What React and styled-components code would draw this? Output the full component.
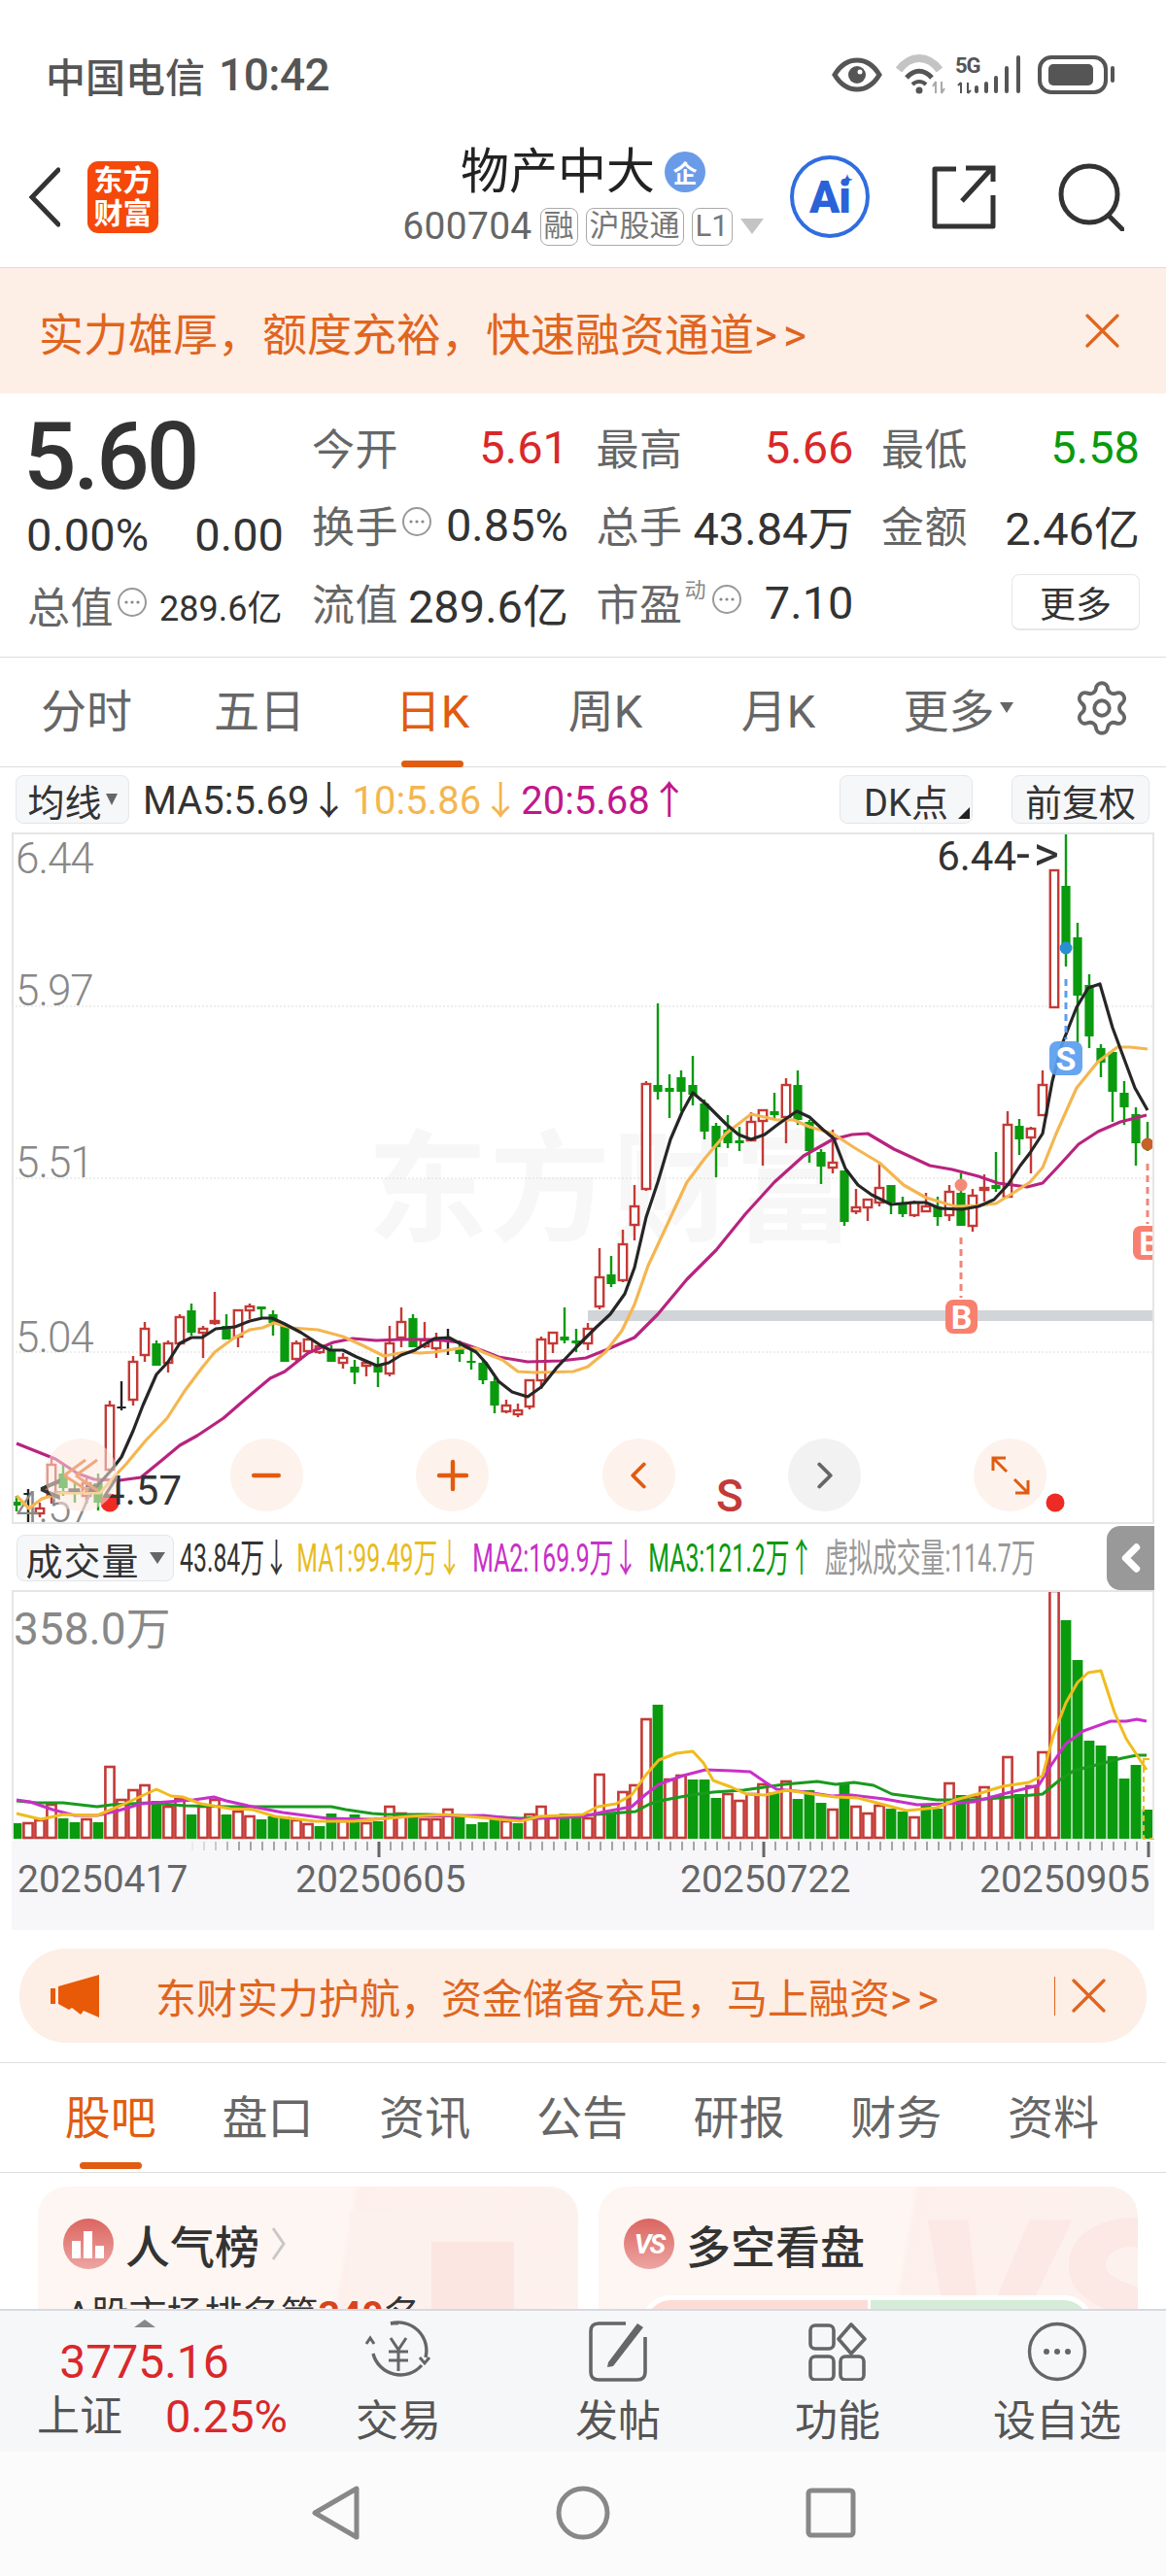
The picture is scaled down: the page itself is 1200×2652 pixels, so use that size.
import React from "react";
import styled, { createGlobalStyle } from "styled-components";
import { Settings, Minus, Plus, ChevronLeft, ChevronRight } from "lucide-react";

const Global = createGlobalStyle`
  html, body { margin: 0; padding: 0; background: #fff; }
  * { box-sizing: border-box; }
  body { font-family: Roboto, "Noto Sans CJK SC", sans-serif; }
`;

const C = { red: "#d9282a", hollow: "#c43a36", green: "#0a9a0e", orange: "#e05c10", label: "#666", text: "#333" };

/* ---------- chart data, in page pixels ---------- */
const candles = [
  ["g",1540,1546,1550,1556],["k",1533,1537,1538,1568],["r",1547,1553,1558,1562],["r",1502,1508,1540,1548],["g",1508,1517,1532,1540],
  ["g",1525,1535,1538,1547],["r",1522,1527,1540,1548],["g",1517,1527,1547,1555],["r",1442,1447,1513,1515],["k",1422,1448,1449,1452],
  ["r",1396,1402,1441,1447],["r",1361,1368,1395,1402],["g",1380,1383,1406,1406],["r",1380,1383,1403,1413],["r",1353,1356,1383,1385],
  ["g",1342,1349,1372,1375],["r",1365,1368,1372,1398],["r",1330,1360,1362,1364],["g",1353,1365,1379,1379],["r",1348,1349,1376,1387],
  ["r",1342,1345,1349,1358],["g",1345,1345,1348,1357],["g",1349,1353,1362,1375],["g",1365,1365,1402,1402],["r",1380,1383,1399,1402],
  ["r",1378,1379,1391,1393],["r",1383,1386,1392,1394],["g",1385,1390,1402,1402],["r",1393,1398,1403,1409],["g",1400,1407,1413,1425],
  ["r",1400,1403,1406,1417],["g",1397,1405,1413,1428],["r",1365,1383,1414,1417],["r",1346,1361,1377,1387],["g",1353,1357,1387,1387],
  ["r",1361,1380,1386,1388],["r",1372,1380,1388,1398],["k",1368,1378,1379,1395],["g",1380,1387,1394,1402],["g",1390,1401,1403,1410],
  ["g",1400,1403,1421,1425],["g",1418,1422,1447,1455],["r",1441,1447,1453,1455],["r",1445,1452,1456,1459],["r",1420,1421,1448,1451],
  ["r",1376,1379,1421,1430],["r",1372,1372,1383,1393],["g",1346,1376,1380,1383],["g",1368,1380,1383,1392],["r",1362,1368,1383,1390],
  ["r",1285,1315,1345,1348],["g",1293,1312,1322,1325],["r",1266,1281,1318,1320],["r",1220,1242,1261,1277],["r",1113,1116,1224,1226],
  ["g",1033,1117,1124,1132],["g",1106,1120,1124,1151],["g",1102,1109,1124,1144],["g",1087,1117,1127,1138],["g",1132,1136,1165,1173],
  ["g",1156,1159,1181,1212],["g",1148,1163,1177,1182],["g",1160,1174,1177,1185],["r",1145,1155,1174,1175],["r",1143,1143,1154,1200],
  ["g",1125,1144,1148,1151],["r",1110,1117,1150,1177],["g",1102,1117,1153,1158],["g",1153,1155,1185,1197],["g",1183,1186,1201,1219],
  ["r",1163,1197,1202,1208],["g",1205,1205,1258,1262],["r",1224,1243,1247,1250],["r",1235,1235,1243,1257],["r",1198,1223,1238,1242],
  ["g",1220,1220,1238,1250],["g",1232,1238,1250,1253],["r",1236,1238,1251,1253],["r",1228,1242,1247,1248],["g",1232,1242,1253,1262],
  ["r",1220,1227,1251,1257],["g",1208,1228,1262,1262],["r",1224,1231,1262,1268],["r",1209,1223,1224,1237],["g",1186,1220,1224,1227],
  ["r",1144,1158,1232,1232],["g",1152,1159,1173,1189],["r",1160,1162,1171,1208],["r",1102,1117,1148,1148],["r",896,896,1037,1037],
  ["g",857,912,980,995],["g",950,965,1025,1073],["g",1003,1014,1067,1079],["g",1075,1079,1094,1109],["g",1083,1083,1124,1155],
  ["g",1113,1125,1140,1158],["g",1140,1147,1177,1200],["g",1155,1175,1180,1185],
];

const ma5 = "88,1530 100,1530 115,1513 125,1500 137,1473 147,1447 161,1415 173,1402 185,1383 197,1377 208,1377 222,1368 242,1366 257,1360 270,1357 280,1357 293,1363 310,1372 330,1385 340,1390 353,1390 367,1397 388,1406 400,1403 413,1395 427,1390 447,1378 462,1377 473,1383 490,1392 500,1403 513,1422 527,1433 543,1438 557,1428 573,1408 593,1387 613,1367 628,1353 643,1332 653,1305 665,1253 677,1217 690,1173 702,1145 713,1125 727,1137 747,1157 760,1168 773,1173 787,1168 800,1158 820,1144 833,1150 847,1163 858,1172 870,1203 883,1220 897,1230 917,1240 940,1238 953,1238 967,1244 990,1245 1007,1242 1023,1235 1037,1220 1050,1200 1060,1187 1073,1167 1083,1113 1093,1075 1108,1037 1120,1017 1132,1013 1145,1058 1158,1093 1168,1120 1181,1143";
const ma10 = "17,1540 30,1553 43,1543 63,1537 103,1537 115,1523 130,1507 150,1483 172,1460 190,1432 208,1408 221,1392 240,1378 257,1369 270,1367 282,1362 300,1367 327,1369 353,1376 373,1385 395,1396 417,1392 433,1393 447,1392 473,1388 490,1388 497,1392 517,1400 533,1412 550,1413 590,1412 605,1407 623,1392 640,1370 653,1343 667,1303 687,1260 707,1217 725,1193 747,1167 773,1147 800,1153 817,1153 833,1160 857,1167 880,1182 905,1197 930,1220 953,1233 983,1242 1007,1241 1025,1239 1043,1228 1060,1217 1073,1202 1087,1167 1108,1120 1130,1093 1150,1078 1163,1078 1181,1080";
const ma20 = "17,1486 37,1494 57,1502 80,1517 97,1523 123,1524 145,1521 167,1503 185,1488 203,1478 230,1460 253,1440 278,1419 293,1412 317,1393 343,1382 363,1378 387,1380 413,1379 447,1379 473,1382 490,1388 513,1397 543,1402 577,1401 603,1398 623,1390 653,1377 677,1353 707,1317 737,1287 767,1250 797,1217 827,1190 857,1173 877,1168 893,1167 920,1183 957,1200 980,1204 1007,1211 1027,1218 1057,1222 1073,1218 1090,1200 1110,1178 1130,1165 1153,1155 1180,1148";

const vols = [
  ["g",1877],["r",1877],["r",1874],["r",1858],["g",1872],["g",1876],["r",1873],["g",1876],["r",1819],["r",1853],["r",1843],["r",1838],["g",1854],["r",1860],["r",1852],["g",1868],
  ["r",1860],["r",1853],["g",1868],["r",1865],["r",1870],["g",1873],["g",1870],["g",1870],["r",1874],["r",1878],["g",1880],["g",1867],["r",1875],["g",1868],["r",1877],["g",1875],
  ["r",1860],["r",1867],["g",1870],["r",1873],["r",1873],["r",1863],["g",1868],["g",1878],["g",1876],["g",1870],["r",1875],["g",1877],["r",1868],["r",1860],["r",1872],["g",1867],["g",1868],
  ["r",1872],["r",1827],["g",1867],["r",1845],["r",1838],["r",1770],["g",1755],["r",1832],["r",1828],["g",1832],["g",1832],["g",1851],["r",1847],["r",1854],["r",1847],["r",1837],["g",1845],
  ["r",1834],["g",1852],["g",1843],["g",1856],["r",1863],["g",1835],["r",1860],["r",1867],["r",1859],["g",1862],["g",1865],["r",1871],["g",1857],["g",1862],["r",1836],["g",1848],["r",1850],
  ["r",1840],["r",1850],["r",1809],["g",1847],["r",1839],["r",1804],["r",1638],["g",1668],["g",1709],["g",1792],["g",1797],["g",1808],["g",1831],["g",1817],["g",1863],
];

const vma1 = "17,1867 42,1873 65,1868 100,1869 126,1858 161,1842 176,1849 188,1850 207,1857 237,1862 260,1863 283,1870 325,1875 364,1875 421,1870 459,1868 482,1870 536,1875 555,1870 600,1868 615,1860 634,1857 650,1848 665,1827 678,1812 696,1805 713,1803 724,1815 734,1833 753,1840 768,1847 787,1848 810,1843 837,1847 860,1850 883,1851 906,1857 933,1864 964,1861 983,1853 1006,1847 1032,1839 1059,1835 1073,1828 1084,1787 1097,1753 1109,1732 1120,1722 1133,1720 1147,1763 1159,1790 1180,1822";
const vma2 = "17,1853 31,1855 54,1863 77,1869 100,1869 122,1864 145,1857 172,1855 199,1853 220,1850 233,1854 260,1860 291,1866 337,1872 383,1873 421,1870 498,1869 536,1873 600,1870 623,1865 650,1860 665,1847 678,1837 703,1828 726,1822 753,1823 772,1824 788,1835 799,1842 830,1845 856,1849 876,1848 910,1852 944,1858 975,1857 1002,1855 1032,1847 1069,1838 1082,1817 1097,1795 1115,1782 1143,1772 1159,1772 1170,1770 1180,1772";
const vma3 = "17,1854 38,1856 65,1856 100,1860 115,1858 153,1856 191,1859 237,1860 306,1860 341,1860 356,1863 383,1867 398,1868 440,1868 498,1870 536,1872 600,1869 654,1865 669,1857 684,1853 711,1848 734,1845 765,1843 807,1837 841,1834 860,1837 879,1835 899,1838 918,1847 964,1853 1002,1853 1040,1850 1073,1847 1090,1833 1105,1823 1136,1815 1155,1810 1170,1807 1180,1807";

/* ---------- page shell ---------- */
const Page = styled.div`
  width: 1200px; height: 2652px; display: flex; flex-direction: column; overflow: hidden; background: #fff;
`;
const Scroll = styled.div`
  flex: 1; min-height: 0; overflow: hidden;
`;

/* ---------- status bar ---------- */
const StatusBar = styled.div`
  height: 130px; flex: none; padding: 24px 50px 0 47px; display: flex; align-items: center; justify-content: space-between;
`;
const StatusText = styled.div`
  font-size: 41px; font-weight: 500; color: #555; display: flex; gap: 14px; align-items: center;
`;
const StatusTime = styled.span`
  font-size: 46px; letter-spacing: -0.5px;
`;
const StatusSmall = styled.text`
  font-size: 22px; font-weight: 700; fill: #555; letter-spacing: -1px;
`;
const StatusIcons = () => (
  <svg width="295" height="55" viewBox="855 50 295 55">
    <path d="M859 77C871 57 893 57 905 77C893 97 871 97 859 77Z" fill="none" stroke="#555" strokeWidth="5" />
    <circle cx="882" cy="77" r="9" fill="#555" />
    <circle cx="885" cy="74" r="2.5" fill="#fff" />
    <path d="M925 72C937 56 955 56 967 72" fill="none" stroke="#c4c4c4" strokeWidth="8" />
    <path d="M933 80C941 71 951 71 959 80" fill="none" stroke="#555" strokeWidth="5" />
    <path d="M939 87C943 83 949 83 953 87" fill="none" stroke="#555" strokeWidth="4" />
    <circle cx="946" cy="93" r="3.5" fill="#555" />
    <path d="M963 96V84M963 84l-3 5M969 84V96M969 96l3-5" fill="none" stroke="#aaa" strokeWidth="2" />
    <StatusSmall x="983" y="75">5G</StatusSmall>
    <path d="M989 85V96M986 88l3-3M996 85V96M996 96l3-3" fill="none" stroke="#555" strokeWidth="2" />
    <rect x="1003" y="88" width="4" height="8" rx="2" fill="#555" />
    <rect x="1013" y="84" width="4" height="12" rx="2" fill="#555" />
    <rect x="1023" y="78" width="4" height="18" rx="2" fill="#555" />
    <rect x="1034" y="68" width="4" height="28" rx="2" fill="#555" />
    <rect x="1046" y="57" width="4" height="39" rx="2" fill="#555" />
    <rect x="1070" y="59" width="68" height="36" rx="12" fill="none" stroke="#555" strokeWidth="4" />
    <rect x="1079" y="66" width="46" height="22" rx="5" fill="#555" />
    <rect x="1143" y="68" width="4" height="17" rx="2" fill="#555" />
  </svg>
);

/* ---------- header ---------- */
const Header = styled.div`
  height: 146px; flex: none; border-bottom: 1px solid #ddd; display: grid; grid-template-columns: 1fr auto 1fr; padding: 0 43px;
`;
const HeaderLeft = styled.div`
  display: flex; align-items: center; gap: 28px; margin-left: -13px;
`;
const Logo = styled.div`
  width: 73px; height: 74px; border-radius: 11px; background: #f5480a; color: #fff; font-size: 30px; line-height: 34px;
  font-weight: 700; text-align: center; display: flex; align-items: center; justify-content: center;
`;
const HeaderCenter = styled.div`
  display: flex; flex-direction: column; align-items: center; padding-top: 20px; gap: 9px;
`;
const TitleRow = styled.div`
  display: flex; align-items: center; gap: 10px; height: 54px;
`;
const Title = styled.div`
  font-size: 50px; color: #222; line-height: 54px;
`;
const Badge = styled.span`
  width: 42px; height: 42px; border-radius: 50%; background: #6a9be8; color: #fff; font-size: 25px; font-weight: 700;
  display: flex; align-items: center; justify-content: center;
`;
const SubRow = styled.div`
  display: flex; align-items: center; gap: 8px; height: 40px;
`;
const Code = styled.span`
  font-size: 39px; color: #666; letter-spacing: 0.3px;
`;
const Tag = styled.span`
  border: 1.5px solid #aaa; border-radius: 8px; height: 39px; padding: 0 3px; font-size: 31px; line-height: 35px; color: #777;
`;
const Caret = styled.span`
  display: inline-block; flex: none; width: 0; height: 0;
  border-left: ${p => p.$w}px solid transparent; border-right: ${p => p.$w}px solid transparent;
  border-top: ${p => p.$h}px solid ${p => p.$c};
`;
const HeaderRight = styled.div`
  display: flex; align-items: center; justify-content: flex-end; gap: 63px;
`;
const AiBadge = styled.div`
  width: 82px; height: 85px; border-radius: 50%; border: 4.5px solid #2f6de0; color: #2a62d8; font-size: 46px; font-weight: 900;
  display: flex; align-items: center; justify-content: center; position: relative; letter-spacing: -1px;
`;
const AiStar = styled.span`
  position: absolute; top: 14px; right: 14px; font-size: 14px; line-height: 1;
`;

/* ---------- promo banners ---------- */
const TopBanner = styled.div`
  height: 129px; flex: none; background: #fdeee6; padding: 0 48px 0 40px; display: flex; align-items: center; justify-content: space-between;
  color: #e0651e; font-size: 46px;
`;
const Arrows = styled.span`
  letter-spacing: 6px;
`;
const CloseX = ({ size = 35 }) => (
  <svg width={size} height={size} viewBox="0 0 35 35" fill="none" stroke="#e0651e" strokeWidth="3.2" strokeLinecap="round" style={{ flex: "none" }}>
    <path d="M2 2L33 33M33 2L2 33" />
  </svg>
);

/* ---------- quote stats ---------- */
const Stats = styled.div`
  height: 272px; flex: none; border-bottom: 1px solid #ddd; padding: 15px 28px 0; display: grid; grid-template-columns: 264px 796px; column-gap: 29px;
`;
const LeftCol = styled.div`
  display: flex; flex-direction: column;
`;
const BigPrice = styled.div`
  font-size: 96px; font-weight: 500; color: #333; letter-spacing: -3px; height: 100px; line-height: 100px; margin-left: -4px;
`;
const ChangeRow = styled.div`
  display: flex; justify-content: space-between; font-size: 47px; color: #333; height: 62px; line-height: 62px; margin-left: -1px;
`;
const TotalRow = styled.div`
  display: flex; align-items: center; height: 80px; margin-top: 1px;
`;
const StatGrid = styled.div`
  display: grid; grid-template-columns: 264px 265px 266px; grid-auto-rows: 80px; column-gap: 28.5px;
`;
const Cell = styled.div`
  display: flex; align-items: center;
`;
const Label = styled.span`
  font-size: 44px; color: ${C.label}; letter-spacing: 0.5px;
`;
const Value = styled.span`
  font-size: ${p => p.$size || 47}px; color: ${p => p.$c || C.text}; margin-left: ${p => p.$left ? "12px" : "auto"};
`;
const Sup = styled.span`
  align-self: flex-start; margin: 9px 2px 0 2px; font-size: 22px; color: #888;
`;
const MoreBtn = styled.div`
  margin-left: auto; width: 132px; height: 58px; border: 1.5px solid #e6e7ea; border-bottom-width: 2px; border-radius: 8px;
  display: flex; align-items: center; justify-content: center; font-size: 37px; color: #333;
`;
const InfoDot = () => (
  <svg width="32" height="32" viewBox="0 0 32 32" style={{ flex: "none", margin: "-6px 0 0 3px" }}>
    <circle cx="16" cy="16" r="14" fill="none" stroke="#999" strokeWidth="2" />
    <circle cx="10" cy="16" r="1.6" fill="#888" /><circle cx="16" cy="16" r="1.6" fill="#888" /><circle cx="22" cy="16" r="1.6" fill="#888" />
  </svg>
);

/* ---------- tab bars ---------- */
const PeriodTabs = styled.div`
  height: 113px; flex: none; border-bottom: 1px solid #ddd; display: grid; grid-template-columns: repeat(6, 178px) 1fr; padding-bottom: 9px; align-items: center;
`;
const Tab = styled.div`
  position: relative; font-size: 47px; text-align: center; color: ${p => p.$on ? C.orange : "#666"}; display: flex; justify-content: center; align-items: center; gap: 5px;
  padding-left: ${p => p.$pl || 0}px;
  ${p => p.$on ? `&::after { content: ""; position: absolute; left: 50%; margin-left: -32px; bottom: ${p.$bar}px; width: 64px; height: 7px; border-radius: 4px; background: ${C.orange}; }` : ""}
`;
const GearCell = styled.div`
  display: flex; justify-content: center; color: #666;
`;
const InfoTabs = styled.div`
  margin-top: 20px; height: 114px; border-top: 1px solid #ddd; border-bottom: 1px solid #ddd; padding: 0 33px 8px 33px;
  display: grid; grid-template-columns: repeat(7, 161.7px); align-items: center;
`;

/* ---------- toolbar over the chart ---------- */
const Toolbar = styled.div`
  height: 67px; flex: none; padding: 8px 17px 0 16px; display: flex; align-items: flex-start;
`;
const ToolBtn = styled.div`
  position: relative; height: 50px; width: ${p => p.$w}px; background: #f6f7f9; border: 1.5px solid #e4e6ea; border-radius: 8px;
  font-size: 38px; color: #333; display: flex; align-items: center; justify-content: center; gap: 4px;
  margin-left: ${p => p.$ml || "0"};
`;
const CornerMark = styled.span`
  position: absolute; right: 2px; bottom: 4px; width: 0; height: 0; border-left: 12px solid transparent; border-bottom: 12px solid #222;
`;
const MaText = styled.span`
  font-size: 40px; color: ${p => p.$c}; margin-left: ${p => p.$ml}px; height: 50px; line-height: 54px; white-space: nowrap;
`;

/* ---------- price chart ---------- */
const ChartFrame = styled.div`
  position: relative; flex: none; margin: 0 12px; height: ${p => p.$h}px;
`;
const ChartSvg = styled.svg`
  display: block; width: 1176px; height: ${p => p.$h}px;
`;
const AxisLabel = styled.text`
  font-size: 44px; font-weight: 300; fill: #888; letter-spacing: -1px;
`;
const VolMax = styled.text`
  font-size: 46px; fill: #888;
`;
const Pointer = styled.text`
  font-size: 42px; font-weight: 400; fill: #333; text-anchor: end;
`;
const PointerArrow = styled.tspan`
  font-size: 50px; letter-spacing: 4px;
`;
const Watermark = styled.text`
  font-size: 124px; font-weight: 700; fill: #f7f7f7; letter-spacing: 2px;
`;
const MarkerText = styled.text`
  font-size: 34px; font-weight: 700; fill: #fff; text-anchor: middle;
`;
const SellText = styled.text`
  font-size: 46px; font-weight: 500; fill: #c43a36; text-anchor: middle;
`;
const ZoomRow = styled.div`
  position: absolute; left: 33.5px; top: 624px; display: flex; gap: 116.4px;
`;
const ZoomBtn = styled.div`
  width: 75px; height: 75px; border-radius: 50%; background: ${p => p.$grey ? "rgba(238,238,238,.75)" : "rgba(252,232,220,.55)"};
  color: ${p => p.$grey ? "#666" : C.orange}; display: flex; align-items: center; justify-content: center;
`;

const Candle = ({ i, d }) => {
  const [t, hi, top, bot, lo] = d;
  const x = 17 + i * 12;
  const color = t === "g" ? C.green : t === "k" ? "#222" : C.hollow;
  return (
    <g>
      <path d={`M${x} ${hi}V${top}M${x} ${bot}V${lo}`} stroke={color} strokeWidth="2.4" fill="none" />
      {t === "r"
        ? <rect x={x - 4.2} y={top} width={8.4} height={Math.max(bot - top, 2)} fill="#fff" stroke={color} strokeWidth="2.4" />
        : <rect x={x - 4.6} y={top} width={9.2} height={Math.max(bot - top, 2)} fill={color} />}
    </g>
  );
};

const ChartPanel = () => (
  <ChartFrame $h={713}>
    <ChartSvg $h={713} viewBox="12 857 1176 713">
      <Watermark x="378" y="1268">东方财富</Watermark>
      <rect x="605" y="1349" width="582" height="11" fill="#d1d4d9" />
      {[1036, 1213, 1392].map(y => (
        <line key={y} x1="12" x2="1188" y1={y} y2={y} stroke="#ddd" strokeWidth="1" strokeDasharray="2 2" />
      ))}
      <AxisLabel x="16" y="899">6.44</AxisLabel>
      <AxisLabel x="16" y="1035">5.97</AxisLabel>
      <AxisLabel x="16" y="1212">5.51</AxisLabel>
      <AxisLabel x="16" y="1392">5.04</AxisLabel>
      {candles.map((d, i) => <Candle key={i} i={i} d={d} />)}
      <AxisLabel x="16" y="1567">4.57</AxisLabel>
      <polyline points={ma20} fill="none" stroke="#b8237f" strokeWidth="3.2" strokeLinejoin="round" />
      <polyline points={ma10} fill="none" stroke="#f4b650" strokeWidth="3.2" strokeLinejoin="round" />
      <polyline points={ma5} fill="none" stroke="#262626" strokeWidth="3.2" strokeLinejoin="round" />
      <Pointer x="1094" y="896">6.44<PointerArrow>-&gt;</PointerArrow></Pointer>
      <circle cx="113" cy="1547" r="9.5" fill="#ee2a25" />
      <Pointer x="187" y="1549"><PointerArrow>&lt;--</PointerArrow>4.57</Pointer>
      <circle cx="1086" cy="1547" r="9.5" fill="#ee2a25" />
      <SellText x="751" y="1556">S</SellText>
      <path d="M68 1519L90 1503M68 1519L93 1535M80 1519L102 1503M80 1519L103 1535" transform="translate(-2 0)" fill="none" stroke={C.orange} strokeWidth="3" />
      {/* buy and sell marks */}
      <circle cx="1097" cy="976" r="6.5" fill="#2a8fd0" />
      <line x1="1097" x2="1097" y1="1008" y2="1070" stroke="#5a9df0" strokeWidth="3" strokeDasharray="7 5" />
      <rect x="1080" y="1072" width="34" height="35" rx="8" fill="#5a9df0" fillOpacity=".92" />
      <MarkerText x="1097" y="1102">S</MarkerText>
      <circle cx="989" cy="1220" r="6.5" fill="#f58a78" />
      <line x1="989" x2="989" y1="1274" y2="1336" stroke="#f0857a" strokeWidth="3" strokeDasharray="7 5" />
      <rect x="973" y="1338" width="33" height="35" rx="8" fill="#f8806f" />
      <MarkerText x="989.5" y="1368">B</MarkerText>
      <circle cx="1181" cy="1178" r="6.5" fill="#c8602a" />
      <line x1="1181" x2="1181" y1="1198" y2="1260" stroke="#f0857a" strokeWidth="3" strokeDasharray="7 5" />
      <rect x="1166" y="1262" width="34" height="35" rx="8" fill="#f8806f" />
      <MarkerText x="1183" y="1292">B</MarkerText>
      <rect x="13" y="858" width="1174" height="710" fill="none" stroke="#e5e5e5" strokeWidth="2" />
    </ChartSvg>
    <ZoomRow>
      <ZoomBtn />
      <ZoomBtn><Minus size={44} strokeWidth={2.4} /></ZoomBtn>
      <ZoomBtn><Plus size={48} strokeWidth={2.2} /></ZoomBtn>
      <ZoomBtn><ChevronLeft size={46} strokeWidth={2} /></ZoomBtn>
      <ZoomBtn $grey><ChevronRight size={46} strokeWidth={2} /></ZoomBtn>
      <ZoomBtn>
        <svg width="42" height="42" viewBox="0 0 42 42" fill="none" stroke="currentColor" strokeWidth="3">
          <path d="M3 16V3H16M3 3L17 17M39 26V39H26M39 39L25 25" />
        </svg>
      </ZoomBtn>
    </ZoomRow>
  </ChartFrame>
);

/* ---------- volume ---------- */
const VolHeader = styled.div`
  position: relative; flex: none; height: 67px; padding: 10px 0 0 17px; display: flex; align-items: flex-start; overflow: hidden;
`;
const VolSelect = styled.div`
  flex: none; width: 162px; height: 48px; background: #f6f7f9; border: 1.5px solid #e4e6ea; border-radius: 8px; font-size: 38px; color: #333;
  display: flex; align-items: center; justify-content: center; gap: 10px; letter-spacing: 1px; white-space: nowrap;
`;
const Squeezed = styled.div`
  flex: none; margin-left: 6px; margin-top: -3px; display: flex; transform: scaleX(.62); transform-origin: left center; height: 48px; align-items: center;
`;
const VolItem = styled.span`
  font-size: 40px; color: ${p => p.$c}; width: ${p => p.$w}px; flex: none; white-space: nowrap;
`;
const Handle = styled.div`
  position: absolute; right: 12px; top: 1px; width: 49px; height: 66px; background: #999; border-radius: 14px 0 0 14px; color: #fff;
  display: flex; align-items: center; justify-content: center;
`;
const VolPanel = () => (
  <ChartFrame $h={258}>
    <ChartSvg $h={258} viewBox="12 1637 1176 258">
      <VolMax x="14" y="1693">358.0万</VolMax>
      {vols.map(([t, top], i) => {
        const x = 17 + i * 12;
        return t === "g"
          ? <rect key={i} x={x - 5.4} y={top} width={10.8} height={1893 - top} fill={C.green} />
          : <rect key={i} x={x - 4.6} y={top} width={9.2} height={1892 - top} fill="#fff" stroke={C.hollow} strokeWidth="2.6" />;
      })}
      <rect x="1177" y="1811" width="10" height="82" fill="none" stroke="#f0bc1e" strokeWidth="2" strokeDasharray="6 4" />
      <polyline points={vma3} fill="none" stroke="#1a9a1e" strokeWidth="3" strokeLinejoin="round" />
      <polyline points={vma2} fill="none" stroke="#c830c8" strokeWidth="3" strokeLinejoin="round" />
      <polyline points={vma1} fill="none" stroke="#f0bc1e" strokeWidth="3" strokeLinejoin="round" />
      <path d="M13 1637V1893M1187 1637V1893M12 1638H1188" fill="none" stroke="#e5e5e5" strokeWidth="2" />
    </ChartSvg>
  </ChartFrame>
);
const DateAxis = styled.div`
  flex: none; margin: 0 12px; height: 92px; background: #f7f7fa; display: flex; flex-direction: column;
`;
const DateRow = styled.div`
  display: grid; grid-template-columns: 286px 396px 308px 1fr; padding-left: 6px; font-size: 39px; color: #666; line-height: 46px; margin-top: -4px;
`;
const Ticks = () => (
  <svg width="1176" height="21" viewBox="12 1895 1176 21" style={{ display: "block" }}>
    {Array.from({ length: 84 }, (_, i) => {
      const x = 198 + i * 12;
      const big = x === 390 || x === 786 || x === 1182;
      const op = i < 4 ? 0.15 + i * 0.2 : 1;
      return <line key={i} x1={x} x2={x} y1="1896" y2={big ? 1912 : 1905} stroke={big ? "#666" : "#888"} strokeWidth={big ? 3 : 1.5} opacity={op} />;
    })}
  </svg>
);

const PromoPill = styled.div`
  margin: 19px 20px 0; height: 97px; border-radius: 48px; background: #fdeee6; display: flex; align-items: center;
  padding-left: 32px; color: #e0651e; font-size: 42px;
`;
const PromoText = styled.span`
  margin-left: 58px; width: 925px; white-space: nowrap;
`;
const PromoDivider = styled.span`
  width: 1px; height: 40px; background: #e0651e; margin-right: 17px;
`;
const Megaphone = () => (
  <svg width="50" height="44" viewBox="0 0 50 44" style={{ flex: "none" }}>
    <path d="M0 14H5V30H0ZM8 12L50 0V44L34 37L31 41L22 34L19 36L8 30Z" fill="#e85a08" />
  </svg>
);

/* ---------- community cards ---------- */
const Cards = styled.div`
  margin: 14px 29px 0 39px; display: grid; grid-template-columns: 556px 555px; column-gap: 21px;
`;
const Card = styled.div`
  position: relative; height: 200px; border-radius: 30px 30px 0 0; overflow: hidden; background: linear-gradient(100deg, #fdf6f3 0%, #fef6f3 55%, #fdf0ec 56%, #fdf1ee 100%);
`;
const PodiumBlock = styled.div`
  position: absolute; left: 405px; top: 57px; width: 85px; height: 90px; background: #fbe6e2;
`;
const PodiumBack = styled.div`
  position: absolute; left: 320px; top: 25px; width: 130px; height: 140px; background: #fdf1ed;
`;
const GhostVS = styled.div`
  position: absolute; right: -40px; top: 5px; font-size: 230px; line-height: 230px; font-weight: 900; font-style: italic; color: #fce8e4; letter-spacing: -8px;
`;
const CardHead = styled.div`
  position: relative; display: flex; align-items: center; height: 52px; margin: 33px 0 0 26px; gap: 12px;
`;
const CardIcon = styled.div`
  width: 52px; height: 52px; border-radius: 50%; background: linear-gradient(#dc6560, #eda5a2); color: #fff; flex: none;
  display: flex; align-items: center; justify-content: center; font-size: 28px; font-weight: 700; font-style: italic; letter-spacing: -2px;
`;
const CardTitle = styled.span`
  font-size: 46px; color: #333; font-weight: 500;
`;
const CardLine = styled.div`
  position: relative; margin: 26px 0 0 29px; font-size: 39px; color: #333; line-height: 44px; white-space: nowrap;
  b { color: #d9421c; font-weight: 700; }
`;
const GaugeBox = styled.div`
  position: absolute; left: 44px; top: 112px; width: 465px; height: 80px; border: 5px solid #fff; border-radius: 30px 30px 0 0; overflow: hidden;
  display: grid; grid-template-columns: 228px 1fr; column-gap: 3px; background: #fff;
`;
const GaugeSide = styled.div`
  background: ${p => p.$c};
`;

/* ---------- bottom bars ---------- */
const Footer = styled.div`
  height: 147px; flex: none; background: #f6f7f9; border-top: 2px solid #d8d9de; display: grid; grid-template-columns: 297px repeat(4, 226px);
`;
const IndexCol = styled.div`
  display: flex; flex-direction: column; align-items: center; padding-top: 9px;
`;
const IndexArrow = styled.span`
  width: 0; height: 0; border-left: 11px solid transparent; border-right: 11px solid transparent; border-bottom: 8px solid #888;
`;
const IndexValue = styled.div`
  font-size: 48px; color: ${C.red}; line-height: 52px; margin-top: 10px;
`;
const IndexRow = styled.div`
  display: flex; align-self: flex-start; width: 258px; margin-left: 38px; justify-content: space-between; align-items: center; line-height: 52px; margin-top: 4px;
`;
const IndexName = styled.span`
  font-size: 44px; color: #555;
`;
const IndexChange = styled.span`
  font-size: 47px; color: ${C.red};
`;
const FootItem = styled.div`
  display: flex; flex-direction: column; align-items: center; padding-top: 10px; color: #555;
`;
const FootIconBox = styled.div`
  height: 64px; display: flex; align-items: center; justify-content: center;
`;
const FootLabel = styled.span`
  font-size: 44px; line-height: 52px; margin-top: 14px; color: #555;
`;
const NavBar = styled.div`
  height: 128px; flex: none; background: #fbfbfb; display: flex; align-items: center; justify-content: center; gap: 199px; padding-bottom: 2px;
`;
const NavIcon = styled.svg`
  width: 56px; height: 56px; fill: none; stroke: #888; stroke-width: 5; stroke-linejoin: round;
`;

const YenIcon = () => (
  <svg width="76" height="64" viewBox="0 0 76 64" fill="none" stroke="#666" strokeWidth="3.4">
    <path d="M30 3A29 29 0 0 1 66 38M62 46A29 29 0 0 1 12 34" />
    <path d="M38 3l-8 0M5 24l4-6 4 6M60 38l5 6 5-6" strokeWidth="3" />
    <path d="M30 18l8 12 8-12M28 32H48M28 41H48M38 30V52" strokeWidth="3" />
  </svg>
);
const PostIcon = () => (
  <svg width="60" height="62" viewBox="0 0 60 62" fill="none" stroke="#666" strokeWidth="3.6">
    <path d="M38 2H10Q2 2 2 10V52Q2 60 10 60H50Q58 60 58 52V16" />
    <path d="M20 42L50 2L56 6L25 46L19 47Z" fill="#666" stroke="none" />
  </svg>
);
const AppsIcon = () => (
  <svg width="60" height="60" viewBox="0 0 60 60" fill="none" stroke="#666" strokeWidth="3.6">
    <rect x="2" y="3" width="24" height="24" rx="5" />
    <path d="M44 2L58 17L44 32L31 17Z" strokeLinejoin="round" />
    <rect x="2" y="35" width="24" height="24" rx="5" />
    <rect x="33" y="35" width="24" height="24" rx="5" />
  </svg>
);
const CircleDots = () => (
  <svg width="62" height="62" viewBox="0 0 62 62" fill="none">
    <circle cx="31" cy="31" r="28.5" stroke="#666" strokeWidth="3.4" />
    <circle cx="20" cy="31" r="3" fill="#666" /><circle cx="31" cy="31" r="3" fill="#666" /><circle cx="42" cy="31" r="3" fill="#666" />
  </svg>
);

export default function App() {
  return (
    <Page>
      <Global />
      <StatusBar>
        <StatusText><span>中国电信</span><StatusTime>10:42</StatusTime></StatusText>
        <StatusIcons />
      </StatusBar>

      <Header>
        <HeaderLeft>
          <svg width="32" height="62" viewBox="0 0 32 62" fill="none" stroke="#333" strokeWidth="5" strokeLinecap="round"><path d="M30 3L3 31L30 59" /></svg>
          <Logo>东方<br />财富</Logo>
        </HeaderLeft>
        <HeaderCenter>
          <TitleRow><Title>物产中大</Title><Badge>企</Badge></TitleRow>
          <SubRow>
            <Code>600704</Code><Tag>融</Tag><Tag>沪股通</Tag><Tag>L1</Tag>
            <Caret $w={12} $h={16} $c="#c4c4c4" />
          </SubRow>
        </HeaderCenter>
        <HeaderRight>
          <AiBadge>Ai<AiStar>✦</AiStar></AiBadge>
          <svg width="68" height="68" viewBox="0 0 68 68" fill="none" stroke="#333" strokeWidth="5">
            <path d="M26 5H4V64H64V32" strokeLinejoin="round" />
            <path d="M32 38L63 4M36 4H64V18" />
          </svg>
          <svg width="68" height="70" viewBox="0 0 68 70" fill="none" stroke="#333" strokeWidth="5" strokeLinecap="round">
            <circle cx="32" cy="32" r="29" /><path d="M52 54L66 68" />
          </svg>
        </HeaderRight>
      </Header>

      <TopBanner>
        <span>实力雄厚，额度充裕，快速融资通道<Arrows>&gt;&gt;</Arrows></span>
        <CloseX />
      </TopBanner>

      <Stats>
        <LeftCol>
          <BigPrice>5.60</BigPrice>
          <ChangeRow><span>0.00%</span><span>0.00</span></ChangeRow>
          <TotalRow><Label>总值</Label><InfoDot /><Value $size={36} $left>289.6亿</Value></TotalRow>
        </LeftCol>
        <StatGrid>
          <Cell><Label>今开</Label><Value $c={C.red}>5.61</Value></Cell>
          <Cell><Label>最高</Label><Value $c={C.red}>5.66</Value></Cell>
          <Cell><Label>最低</Label><Value $c={C.green}>5.58</Value></Cell>
          <Cell><Label>换手</Label><InfoDot /><Value>0.85%</Value></Cell>
          <Cell><Label>总手</Label><Value>43.84万</Value></Cell>
          <Cell><Label>金额</Label><Value>2.46亿</Value></Cell>
          <Cell><Label>流值</Label><Value>289.6亿</Value></Cell>
          <Cell><Label>市盈</Label><Sup>动</Sup><InfoDot /><Value>7.10</Value></Cell>
          <Cell><MoreBtn>更多</MoreBtn></Cell>
        </StatGrid>
      </Stats>

      <PeriodTabs>
        <Tab>分时</Tab>
        <Tab>五日</Tab>
        <Tab $on $bar={-27}>日K</Tab>
        <Tab>周K</Tab>
        <Tab>月K</Tab>
        <Tab $pl={14}>更多<Caret $w={7} $h={11} $c="#666" /></Tab>
        <GearCell><Settings size={62} strokeWidth={1.5} /></GearCell>
      </PeriodTabs>

      <Toolbar>
        <ToolBtn $w={117}>均线<Caret $w={6} $h={12} $c="#666" /></ToolBtn>
        <MaText $c="#333" $ml={14}>MA5:5.69↓</MaText>
        <MaText $c="#f4b650" $ml={4}>10:5.86↓</MaText>
        <MaText $c="#c0178c" $ml={1}>20:5.68↑</MaText>
        <ToolBtn $w={137} $ml="auto">DK点<CornerMark /></ToolBtn>
        <ToolBtn $w={142} $ml="40px">前复权</ToolBtn>
      </Toolbar>

      <ChartPanel />

      <VolHeader>
        <VolSelect>成交量<Caret $w={8} $h={12} $c="#666" /></VolSelect>
        <Squeezed>
          <VolItem $c="#333" $w={194}>43.84万↓</VolItem>
          <VolItem $c="#e8bc1e" $w={292}>MA1:99.49万↓</VolItem>
          <VolItem $c="#c830c8" $w={292}>MA2:169.9万↓</VolItem>
          <VolItem $c="#0a9a0e" $w={292}>MA3:121.2万↑</VolItem>
          <VolItem $c="#999" $w={360}>虚拟成交量:114.7万</VolItem>
        </Squeezed>
        <Handle><ChevronLeft size={44} strokeWidth={4} /></Handle>
      </VolHeader>

      <VolPanel />

      <DateAxis>
        <Ticks />
        <DateRow><span>20250417</span><span>20250605</span><span>20250722</span><span>20250905</span></DateRow>
      </DateAxis>

      <Scroll>
        <PromoPill>
          <Megaphone />
          <PromoText>东财实力护航，资金储备充足，马上融资<Arrows>&gt;&gt;</Arrows></PromoText>
          <PromoDivider />
          <CloseX />
        </PromoPill>

        <InfoTabs>
          <Tab $on $bar={-22}>股吧</Tab>
          <Tab>盘口</Tab>
          <Tab>资讯</Tab>
          <Tab>公告</Tab>
          <Tab>研报</Tab>
          <Tab>财务</Tab>
          <Tab>资料</Tab>
        </InfoTabs>

        <Cards>
          <Card>
            <PodiumBack /><PodiumBlock />
            <CardHead>
              <CardIcon>
                <svg width="36" height="30" viewBox="0 0 36 30" fill="#fff"><rect x="1" y="12" width="9" height="18" /><rect x="13" y="2" width="9" height="28" /><rect x="25" y="17" width="9" height="13" /></svg>
              </CardIcon>
              <CardTitle>人气榜</CardTitle>
              <svg width="16" height="36" viewBox="0 0 16 36" fill="none" stroke="#c8c8c8" strokeWidth="3"><path d="M2 2L13 18L2 34" /></svg>
            </CardHead>
            <CardLine>A股市场排名第<b>340</b>名</CardLine>
          </Card>
          <Card>
            <GhostVS>VS</GhostVS>
            <CardHead>
              <CardIcon>VS</CardIcon>
              <CardTitle>多空看盘</CardTitle>
            </CardHead>
            <GaugeBox><GaugeSide $c="#fddcd8" /><GaugeSide $c="#d5edd8" /></GaugeBox>
          </Card>
        </Cards>
      </Scroll>

      <Footer>
        <IndexCol>
          <IndexArrow />
          <IndexValue>3775.16</IndexValue>
          <IndexRow><IndexName>上证</IndexName><IndexChange>0.25%</IndexChange></IndexRow>
        </IndexCol>
        <FootItem><FootIconBox><YenIcon /></FootIconBox><FootLabel>交易</FootLabel></FootItem>
        <FootItem><FootIconBox><PostIcon /></FootIconBox><FootLabel>发帖</FootLabel></FootItem>
        <FootItem><FootIconBox><AppsIcon /></FootIconBox><FootLabel>功能</FootLabel></FootItem>
        <FootItem><FootIconBox><CircleDots /></FootIconBox><FootLabel>设自选</FootLabel></FootItem>
      </Footer>

      <NavBar>
        <NavIcon viewBox="0 0 56 56"><path d="M50 3V53L7 28Z" /></NavIcon>
        <NavIcon viewBox="0 0 56 56"><circle cx="28" cy="28" r="25" /></NavIcon>
        <NavIcon viewBox="0 0 56 56"><rect x="5" y="5" width="46" height="46" rx="3" /></NavIcon>
      </NavBar>
    </Page>
  );
}
